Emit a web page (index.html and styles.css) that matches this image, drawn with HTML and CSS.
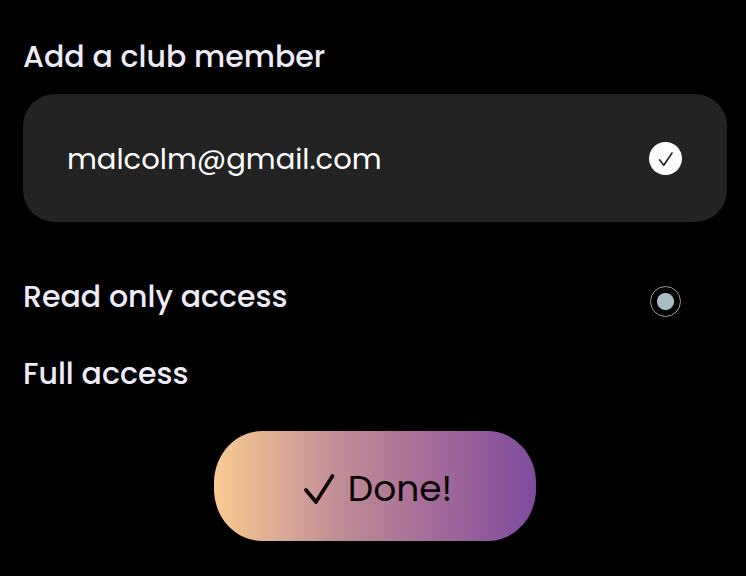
FILE: index.html
```html
<!DOCTYPE html>
<html lang="en">
<head>
<meta charset="utf-8">
<meta name="viewport" content="width=device-width, initial-scale=1">
<title>Add a club member</title>
<link rel="stylesheet" href="styles.css">
</head>
<body>
<form class="invite">
  <label class="label" for="email">Add a club member</label>
  <div class="field">
    <input class="field-input" id="email" type="email" value="malcolm@gmail.com">
    <svg class="field-check" viewBox="0 0 33 33" aria-hidden="true">
      <circle cx="16.500" cy="16.500" r="16.500" fill="#fff"/>
      <path d="M10.500 17.800L14.800 23.200L23 11" fill="none" stroke="#222" stroke-width="1.600" stroke-linecap="round" stroke-linejoin="round"/>
    </svg>
  </div>
  <div class="options">
    <div class="option">
      <label class="label" for="read">Read only access</label>
      <input class="radio" id="read" type="radio" name="access" checked>
    </div>
    <div class="option">
      <label class="label" for="full">Full access</label>
      <input class="radio" id="full" type="radio" name="access">
    </div>
  </div>
  <button class="done" type="button">
    <svg class="done-check" viewBox="0 0 32 32" aria-hidden="true">
      <path d="M2 17L12 29L28.500 3" fill="none" stroke="#0a0205" stroke-width="3.600" stroke-linecap="round" stroke-linejoin="round"/>
    </svg>
    <span>Done!</span>
  </button>
</form>
</body>
</html>
```
FILE: styles.css
```css
* {
  box-sizing: border-box;
}

body {
  margin: 0;
  background: #000;
  font-family: Poppins, Inter, sans-serif;
}

.invite {
  display: flex;
  flex-direction: column;
  padding: 36px 19px 35px 23px;
}

.label {
  color: #eeebf8;
  font-size: 30px;
  font-weight: 500;
  line-height: 42px;
}

.field {
  display: flex;
  align-items: center;
  margin-top: 16px;
  padding: 44px 45px 44px 44px;
  border-radius: 32px;
  background: #232323;
}

.field-input {
  flex: 1;
  min-width: 0;
  height: 40px;
  padding: 2px 0 0;
  border: 0;
  outline: 0;
  background: none;
  color: #fff;
  font: inherit;
  font-size: 29px;
}

.field-check {
  width: 33px;
  height: 33px;
}

.options {
  display: flex;
  flex-direction: column;
  gap: 36px;
  margin-top: 54px;
  padding-right: 46px;
}

.option {
  display: flex;
  align-items: flex-end;
  justify-content: space-between;
  height: 41px;
}

.option .label {
  align-self: flex-start;
}

.radio {
  appearance: none;
  width: 31px;
  height: 31px;
  margin: 0;
  border: 1px solid transparent;
  border-radius: 50%;
}

.radio:checked {
  border-color: #9a9a9a;
  background: radial-gradient(circle, #a9bdc4 8px, transparent 9px);
}

.done {
  display: flex;
  align-items: center;
  align-self: center;
  gap: 12px;
  margin-top: 37px;
  padding: 34px 84px 28px 90px;
  border: 0;
  border-radius: 48px / 52px;
  background: linear-gradient(90deg, #f9ca92, #bf8b96 40%, #a56d98 66%, #804b9d);
  color: #0a0205;
  font: inherit;
  font-size: 36px;
  line-height: 48px;
}

.done-check {
  width: 32px;
  height: 32px;
}
```
